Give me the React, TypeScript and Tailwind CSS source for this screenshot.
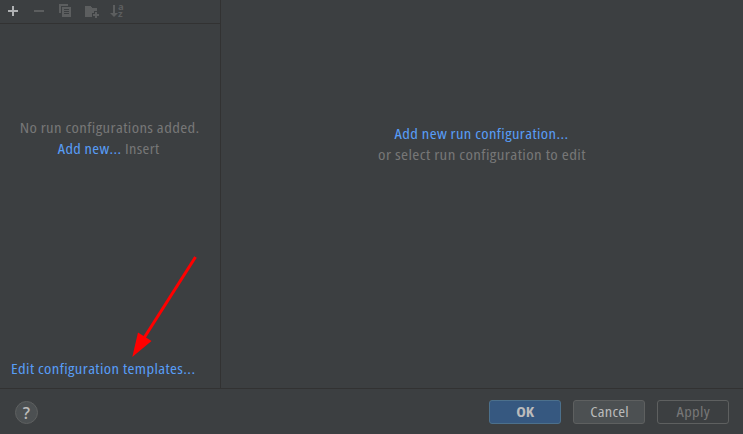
import React from 'react';

function Toolbar() {
  return (
    <div className="flex h-6 shrink-0 items-start border-b border-[#323232]">
      <svg width="118" height="23" viewBox="0 0 118 23" shapeRendering="crispEdges" className="shrink-0">
        <path d="M12 6h2v4h4v2h-4v4h-2v-4H8v-2h4z" fill="#afb1b3" />
        <g fill="#5c5e5f">
          <path d="M34 10h10v2H34z" />
          <path d="M59 4h9v2h-7v7h-2z" />
          <path fillRule="evenodd" d="M62 7h9v10h-9zM64 9v1h5V9zM64 11v1h5v-1zM64 13v1h5v-1z" />
          <path d="M85 6h5l2 2h5v3h-3v2h-2v4h-7z" />
          <path d="M95 12h2v2h2v2h-2v2h-2v-2h-2v-2h2z" />
          <path d="M113 5h2v8h3l-4 4-4-4h3z" shapeRendering="auto" />
        </g>
      </svg>
      <div className="flex w-2 flex-col pt-[3px] font-['Open_Sans',sans-serif] text-[9.5px] leading-[7px] font-bold tracking-normal text-[#5c5e5f] [font-stretch:100%]">
        <span>a</span><span>z</span>
      </div>
    </div>
  );
}

export default function App() {
  return (
    <div className="flex h-[434px] w-[743px] flex-col overflow-hidden bg-[#3c3f41] font-['Open_Sans','Noto_Sans',sans-serif] text-[15px] tracking-[0.35px] whitespace-nowrap text-[#777777] [font-stretch:75%]">
      <main className="relative flex h-[389px] border-b border-[#323232]">
        <aside className="flex w-[221px] flex-col border-r border-[#323232]">
          <Toolbar />
          <div className="flex flex-col items-center pt-[93px] leading-[21px]">
            <div className="scale-x-[1.116]">No run configurations added.</div>
            <div className="-ml-[2px] scale-x-[1.09]"><span className="text-[#589df6]">Add new...</span> Insert</div>
          </div>
          <a className="mt-auto mb-[9px] ml-[11px] w-max origin-left scale-x-[1.11] leading-[21px] text-[#589df6]">Edit configuration templates...</a>
        </aside>
        <section className="flex w-[522px] flex-col items-center pt-[123px] leading-[21px]">
          <div className="-ml-px scale-x-[1.107] text-[#589df6]">Add new run configuration...</div>
          <div className="-ml-px scale-x-[1.13]">or select run configuration to edit</div>
        </section>
        <svg className="absolute top-[250px] left-[125px]" width="80" height="112" viewBox="125 250 80 112">
          <path d="M195.5 257L144 338" stroke="#f00" strokeWidth="3" />
          <path d="M132.3 357L138 332.5L151.5 341z" fill="#f00" />
        </svg>
      </main>
      <footer className="flex h-[45px] items-start pt-[11px] pr-[14px] pl-[15px]">
        <button className="mt-px flex size-[23px] items-center justify-center rounded-full border border-[#5e6060] bg-[#4c5052] text-[16px] font-semibold tracking-normal text-[#bbbbbb] [font-stretch:100%]">?</button>
        <div className="ml-auto flex gap-3">
          <button className="h-6 w-[72px] rounded-[3px] border border-[#4c708c] bg-[#365880] pb-[2px] leading-[20px] font-bold tracking-[-0.2px] text-[#bbbbbb]"><span className="inline-block scale-x-[1.08]">OK</span></button>
          <button className="h-6 w-[72px] rounded-[3px] border border-[#5e6060] bg-[#4c5052] pb-[2px] pl-px leading-[20px] tracking-[0.2px] text-[#bbbbbb]"><span className="inline-block scale-x-[1.1]">Cancel</span></button>
          <button className="h-6 w-[72px] rounded-[3px] border border-[#5e6060] pb-[2px] pl-px leading-[20px]"><span className="inline-block scale-x-[1.1]">Apply</span></button>
        </div>
      </footer>
    </div>
  );
}
